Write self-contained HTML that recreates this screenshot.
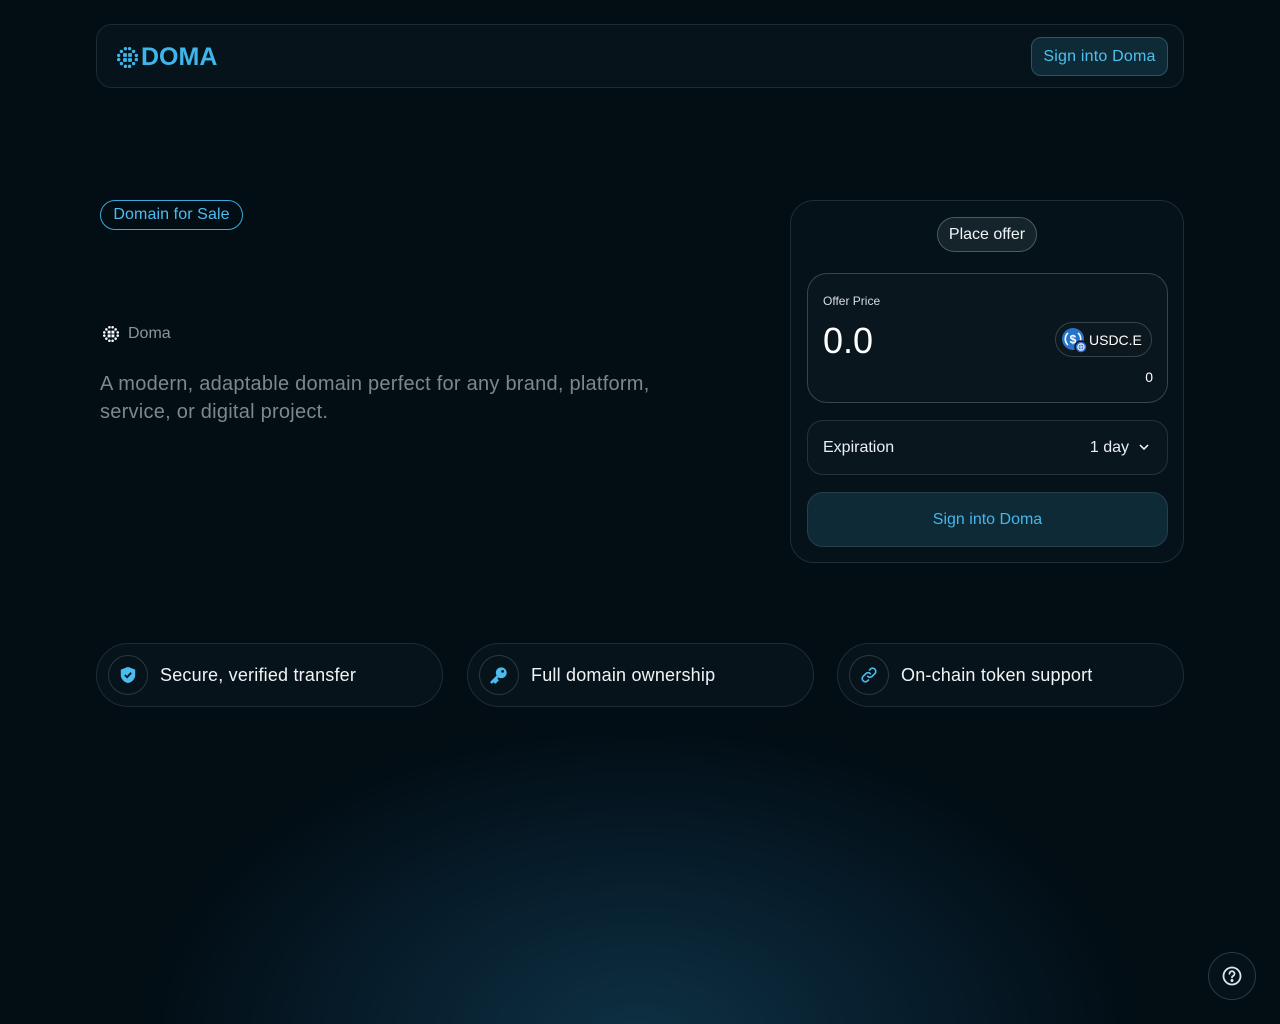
<!DOCTYPE html>
<html><head><meta charset="utf-8"><style>
*{box-sizing:border-box;margin:0;padding:0}
html,body{width:1280px;height:1024px;overflow:hidden}
body{font-family:"Liberation Sans",sans-serif;color:#e8eef2;
background:radial-gradient(ellipse 500px 320px at 640px 1040px,#0e3143 0%,#082030 45%,rgba(2,14,21,0) 100%),#020d14;position:relative}
.hdr{position:absolute;left:96px;top:24px;width:1088px;height:64px;border:1px solid #1d2b33;border-radius:16px;background:#06131a}
.logo{position:absolute;left:20px;top:18px;display:flex;align-items:center;gap:3px;color:#3fb6ea;font-weight:bold;font-size:25px;letter-spacing:0}
.hbtn{position:absolute;right:15px;top:12px;width:137px;height:39px;border:1px solid #2d5565;border-radius:10px;background:#0e2a36;color:#4ec0f0;font-size:16px;text-align:center;line-height:37px;letter-spacing:.2px}
.tag{position:absolute;left:100px;top:200px;width:143px;height:30px;border:1.5px solid #3aa9dc;border-radius:15px;color:#4ebdee;font-size:16px;text-align:center;line-height:28px;letter-spacing:.1px}
.doma{position:absolute;left:103px;top:325px;display:flex;align-items:center;gap:9px;color:#8b969c;font-size:16px}
.desc{position:absolute;left:100px;top:370px;width:600px;color:#7d878c;font-size:20px;line-height:28px;letter-spacing:.25px}
.card{position:absolute;left:790px;top:200px;width:394px;height:363px;border:1px solid #1f2d35;border-radius:24px;background:#06121a}
.po{position:absolute;left:146px;top:16px;width:100px;height:35px;border:1.5px solid #4a5a62;border-radius:18px;background:#15232b;color:#f0f4f6;font-size:16px;text-align:center;line-height:33px}
.box{position:absolute;left:16px;top:72px;width:361px;height:130px;border:1px solid #35464e;border-radius:20px;background:#0a161d}
.box .l{position:absolute;left:15px;top:20px;font-size:12px;color:#d6dde1}
.box .v{position:absolute;left:15px;top:46px;font-size:36px;color:#fff}
.usdc{position:absolute;right:15px;top:48px;width:97px;height:35px;border:1px solid #34434a;border-radius:18px;background:#0c171e;font-size:14px;color:#fff}
.usdc span{position:absolute;left:33px;top:9px}
.box .z{position:absolute;right:14px;top:95px;font-size:14px;color:#fff}
.exp{position:absolute;left:16px;top:219px;width:361px;height:55px;border:1px solid #24333a;border-radius:16px;background:#0a161d;font-size:16px}
.exp .a{position:absolute;left:15px;top:18px}
.exp .b{position:absolute;right:38px;top:18px}
.sbtn{position:absolute;left:16px;top:291px;width:361px;height:55px;border:1px solid #23404d;border-radius:16px;background:#0f2a37;color:#45b6e8;font-size:16px;text-align:center;line-height:53px}
.feat{position:absolute;top:643px;width:347px;height:64px;border:1px solid #1f2c33;border-radius:32px;background:#07131a;font-size:18px;color:#f0f4f6;letter-spacing:.2px}
.feat .ic{position:absolute;left:11px;top:11px;width:40px;height:40px;border:1px solid #2a3840;border-radius:50%;display:flex;align-items:center;justify-content:center}
.feat .t{position:absolute;left:63px;top:21px}
.help{position:absolute;left:1208px;top:952px;width:48px;height:48px;border:1px solid #2a3a42;border-radius:50%;background:#06121a;display:flex;align-items:center;justify-content:center}
</style></head><body>
<div class="hdr">
 <div class="logo"><svg width="21" height="21" viewBox="0 0 20 20" fill="#3fb6ea"><circle cx="8" cy="1.6" r="1.6"/><circle cx="12" cy="1.6" r="1.6"/><circle cx="4.2" cy="4.2" r="1.6"/><circle cx="15.8" cy="4.2" r="1.6"/><circle cx="1.6" cy="8" r="1.6"/><circle cx="1.6" cy="12" r="1.6"/><circle cx="18.4" cy="8" r="1.6"/><circle cx="18.4" cy="12" r="1.6"/><circle cx="4.2" cy="15.8" r="1.6"/><circle cx="15.8" cy="15.8" r="1.6"/><circle cx="8" cy="18.4" r="1.6"/><circle cx="12" cy="18.4" r="1.6"/><rect x="5.8" y="5.8" width="3.6" height="3.6" rx=".6"/><rect x="10.6" y="5.8" width="3.6" height="3.6" rx=".6"/><rect x="5.8" y="10.6" width="3.6" height="3.6" rx=".6"/><rect x="10.6" y="10.6" width="3.6" height="3.6" rx=".6"/></svg>DOMA</div>
 <div class="hbtn">Sign into Doma</div>
</div>
<div class="tag">Domain for Sale</div>
<div class="doma"><svg width="16" height="16" viewBox="0 0 20 20" fill="#fff"><circle cx="8" cy="1.6" r="1.6"/><circle cx="12" cy="1.6" r="1.6"/><circle cx="4.2" cy="4.2" r="1.6"/><circle cx="15.8" cy="4.2" r="1.6"/><circle cx="1.6" cy="8" r="1.6"/><circle cx="1.6" cy="12" r="1.6"/><circle cx="18.4" cy="8" r="1.6"/><circle cx="18.4" cy="12" r="1.6"/><circle cx="4.2" cy="15.8" r="1.6"/><circle cx="15.8" cy="15.8" r="1.6"/><circle cx="8" cy="18.4" r="1.6"/><circle cx="12" cy="18.4" r="1.6"/><rect x="5.8" y="5.8" width="3.6" height="3.6"/><rect x="10.6" y="5.8" width="3.6" height="3.6"/><rect x="5.8" y="10.6" width="3.6" height="3.6"/><rect x="10.6" y="10.6" width="3.6" height="3.6"/></svg>Doma</div>
<div class="desc">A modern, adaptable domain perfect for any brand, platform, service, or digital project.</div>
<div class="card">
 <div class="po">Place offer</div>
 <div class="box">
  <div class="l">Offer Price</div>
  <div class="v">0.0</div>
  <div class="usdc"><svg style="position:absolute;left:5px;top:4px" width="28" height="28" viewBox="0 0 28 28"><circle cx="12" cy="12" r="11" fill="#2775ca"/><path d="M7 6a8 8 0 0 0 0 12M17 6a8 8 0 0 1 0 12" stroke="#fff" stroke-width="1.6" fill="none"/><text x="12" y="16.5" font-size="12" font-weight="bold" fill="#fff" text-anchor="middle" font-family="Liberation Sans">$</text><circle cx="20" cy="20" r="6" fill="#2f6fd0" stroke="#0c171e" stroke-width="1.5"/><circle cx="20" cy="20" r="3.2" fill="none" stroke="#fff" stroke-width="1"/><path d="M17 20h6M20 17v6" stroke="#fff" stroke-width=".8"/></svg><span>USDC.E</span></div>
  <div class="z">0</div>
 </div>
 <div class="exp"><span class="a">Expiration</span><span class="b">1 day</span><svg style="position:absolute;right:18px;top:23px" width="10" height="6" viewBox="0 0 10 6"><path d="M1 1l4 4 4-4" stroke="#fff" stroke-width="1.5" fill="none"/></svg></div>
 <div class="sbtn">Sign into Doma</div>
</div>
<div class="feat" style="left:96px"><div class="ic"><svg width="18" height="18" viewBox="0 0 20 20"><path d="M10 1l8 3v6c0 5-4 8-8 9-4-1-8-4-8-9V4z" fill="#4bbcf0"/><path d="M6.5 10l2.5 2.5 4.5-5" stroke="#07131a" stroke-width="2" fill="none"/></svg></div><span class="t">Secure, verified transfer</span></div>
<div class="feat" style="left:467px"><div class="ic"><svg width="18" height="18" viewBox="0 0 20 20"><circle cx="12.5" cy="7.5" r="6" fill="#4bbcf0"/><path d="M9 11l-7 7M4 16l2 2M6 14l2 2" stroke="#4bbcf0" stroke-width="3" stroke-linecap="round"/><circle cx="14" cy="6" r="1.5" fill="#07131a"/></svg></div><span class="t">Full domain ownership</span></div>
<div class="feat" style="left:837px"><div class="ic"><svg width="18" height="18" viewBox="0 0 20 20" fill="none" stroke="#4bbcf0" stroke-width="1.8" stroke-linecap="round"><path d="M8.5 11.5a3.5 3.5 0 0 0 5 0l3-3a3.5 3.5 0 0 0-5-5l-1 1"/><path d="M11.5 8.5a3.5 3.5 0 0 0-5 0l-3 3a3.5 3.5 0 0 0 5 5l1-1"/></svg></div><span class="t">On-chain token support</span></div>
<div class="help"><svg width="20" height="20" viewBox="0 0 20 20" fill="none" stroke="#e0e6ea" stroke-width="1.8"><circle cx="10" cy="10" r="8.5"/><path d="M7.5 7.8a2.5 2.5 0 1 1 3.3 2.3c-.6.3-.8.7-.8 1.4" stroke-linecap="round"/><circle cx="10" cy="14.5" r=".6" fill="#e0e6ea"/></svg></div>
</body></html>
